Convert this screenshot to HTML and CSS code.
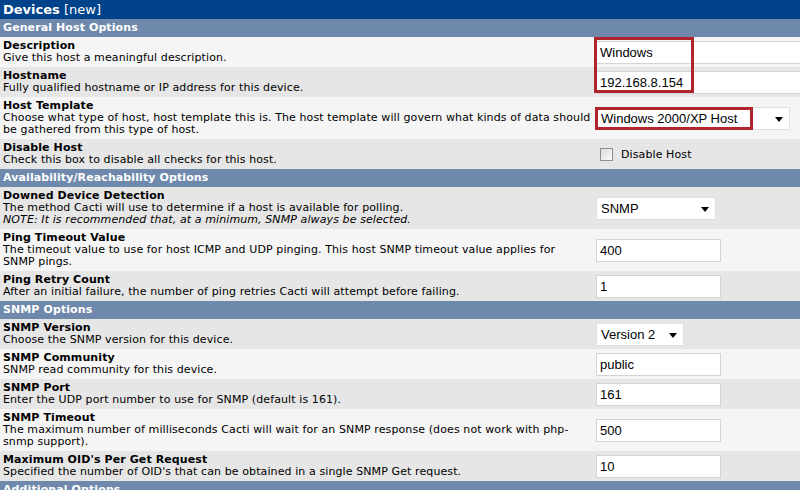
FILE: index.html
```html
<!DOCTYPE html>
<html>
<head>
<meta charset="utf-8">
<title>Devices [new]</title>
<link rel="stylesheet" href="styles.css">
</head>
<body>
<div class="page">
  <div class="title"><b>Devices</b> [new]</div>

  <div class="section">General Host Options</div>
  <div class="row light">
    <div class="desc"><div class="label">Description</div><div class="help">Give this host a meaningful description.</div></div>
    <div class="field">
      <div class="input wide">Windows</div>
      <div class="mark mark-a"></div>
    </div>
  </div>
  <div class="row dark">
    <div class="desc"><div class="label">Hostname</div><div class="help">Fully qualified hostname or IP address for this device.</div></div>
    <div class="field"><div class="input wide">192.168.8.154</div></div>
  </div>
  <div class="row light tall">
    <div class="desc"><div class="label">Host Template</div><div class="help">Choose what type of host, host template this is. The host template will govern what kinds of data should<br>be gathered from this type of host.</div></div>
    <div class="field">
      <div class="select s-template">Windows 2000/XP Host<span class="arrow"></span></div>
      <div class="mark mark-b"></div>
    </div>
  </div>
  <div class="row dark">
    <div class="desc"><div class="label">Disable Host</div><div class="help">Check this box to disable all checks for this host.</div></div>
    <div class="field"><label class="check"><span class="box"></span>Disable Host</label></div>
  </div>

  <div class="section">Availability/Reachability Options</div>
  <div class="row dark tall">
    <div class="desc"><div class="label">Downed Device Detection</div><div class="help">The method Cacti will use to determine if a host is available for polling.<br><i>NOTE: It is recommended that, at a minimum, SNMP always be selected.</i></div></div>
    <div class="field"><div class="select s-snmp">SNMP<span class="arrow"></span></div></div>
  </div>
  <div class="row light tall">
    <div class="desc"><div class="label">Ping Timeout Value</div><div class="help">The timeout value to use for host ICMP and UDP pinging. This host SNMP timeout value applies for<br>SNMP pings.</div></div>
    <div class="field"><div class="input small">400</div></div>
  </div>
  <div class="row dark">
    <div class="desc"><div class="label">Ping Retry Count</div><div class="help">After an initial failure, the number of ping retries Cacti will attempt before failing.</div></div>
    <div class="field"><div class="input small">1</div></div>
  </div>

  <div class="section">SNMP Options</div>
  <div class="row dark">
    <div class="desc"><div class="label">SNMP Version</div><div class="help">Choose the SNMP version for this device.</div></div>
    <div class="field"><div class="select s-version">Version 2<span class="arrow"></span></div></div>
  </div>
  <div class="row light">
    <div class="desc"><div class="label">SNMP Community</div><div class="help">SNMP read community for this device.</div></div>
    <div class="field"><div class="input small">public</div></div>
  </div>
  <div class="row dark">
    <div class="desc"><div class="label">SNMP Port</div><div class="help">Enter the UDP port number to use for SNMP (default is 161).</div></div>
    <div class="field"><div class="input small">161</div></div>
  </div>
  <div class="row light tall">
    <div class="desc"><div class="label">SNMP Timeout</div><div class="help">The maximum number of milliseconds Cacti will wait for an SNMP response (does not work with php-<br>snmp support).</div></div>
    <div class="field"><div class="input small">500</div></div>
  </div>
  <div class="row dark">
    <div class="desc"><div class="label">Maximum OID's Per Get Request</div><div class="help">Specified the number of OID's that can be obtained in a single SNMP Get request.</div></div>
    <div class="field"><div class="input small">10</div></div>
  </div>

  <div class="section">Additional Options</div>
</div>
</body>
</html>
```
FILE: styles.css
```css
html, body {
  margin: 0;
  padding: 0;
  background: #ffffff;
  overflow: hidden;
}
.page {
  width: 800px;
  font-family: "DejaVu Sans", Verdana, sans-serif;
  font-size: 11px;
  letter-spacing: 0.1px;
  color: #000;
}
.title {
  background: #00438a;
  color: #fff;
  height: 19px;
  line-height: 19px;
  padding-left: 3px;
  font-size: 13px;
  letter-spacing: 0;
}
.section {
  background: #6e89ab;
  color: #fff;
  font-weight: bold;
  height: 18px;
  line-height: 18px;
  padding-left: 3px;
}
.row {
  display: grid;
  grid-template-columns: 596px 1fr;
  align-items: center;
  height: 30px;
}
.row.tall { height: 42px; }
.light { background: #f5f5f5; }
.dark { background: #e6e6e6; }
.desc {
  padding-left: 3px;
  line-height: 12px;
}
.label { font-weight: bold; }
.field {
  position: relative;
  height: 100%;
  display: flex;
  align-items: center;
}
.input, .select {
  box-sizing: border-box;
  background: #fff;
  border: 1px solid #d4d4d4;
  font-family: "Liberation Sans", Arial, sans-serif;
  font-size: 13px;
  letter-spacing: 0;
  height: 23px;
  line-height: 21px;
  padding-left: 3px;
  white-space: nowrap;
}
.input.wide { width: 230px; }
.input.small { width: 125px; }
.select {
  position: relative;
  padding-left: 4px;
  border-color: #e0e0e0;
}
.s-template { width: 194px; }
.s-snmp { width: 120px; }
.s-version { width: 88px; }
.arrow {
  position: absolute;
  right: 6px;
  top: 9px;
  width: 0;
  height: 0;
  border-left: 4px solid transparent;
  border-right: 4px solid transparent;
  border-top: 5px solid #000;
}
.check {
  display: flex;
  align-items: center;
  padding-left: 4px;
  font-size: 11px;
}
.box {
  width: 11px;
  height: 11px;
  border: 1px solid #8f8f8f;
  background: linear-gradient(135deg, #dcdcdc, #fbfbfb);
  margin-right: 8px;
}
.mark {
  position: absolute;
  z-index: 2;
  border: 3px solid #b0242b;
  box-sizing: border-box;
  pointer-events: none;
}
.mark-a {
  left: -2px;
  top: 0;
  width: 100px;
  height: 56px;
}
.mark-b {
  left: -1px;
  top: 10px;
  width: 158px;
  height: 23px;
}
```
